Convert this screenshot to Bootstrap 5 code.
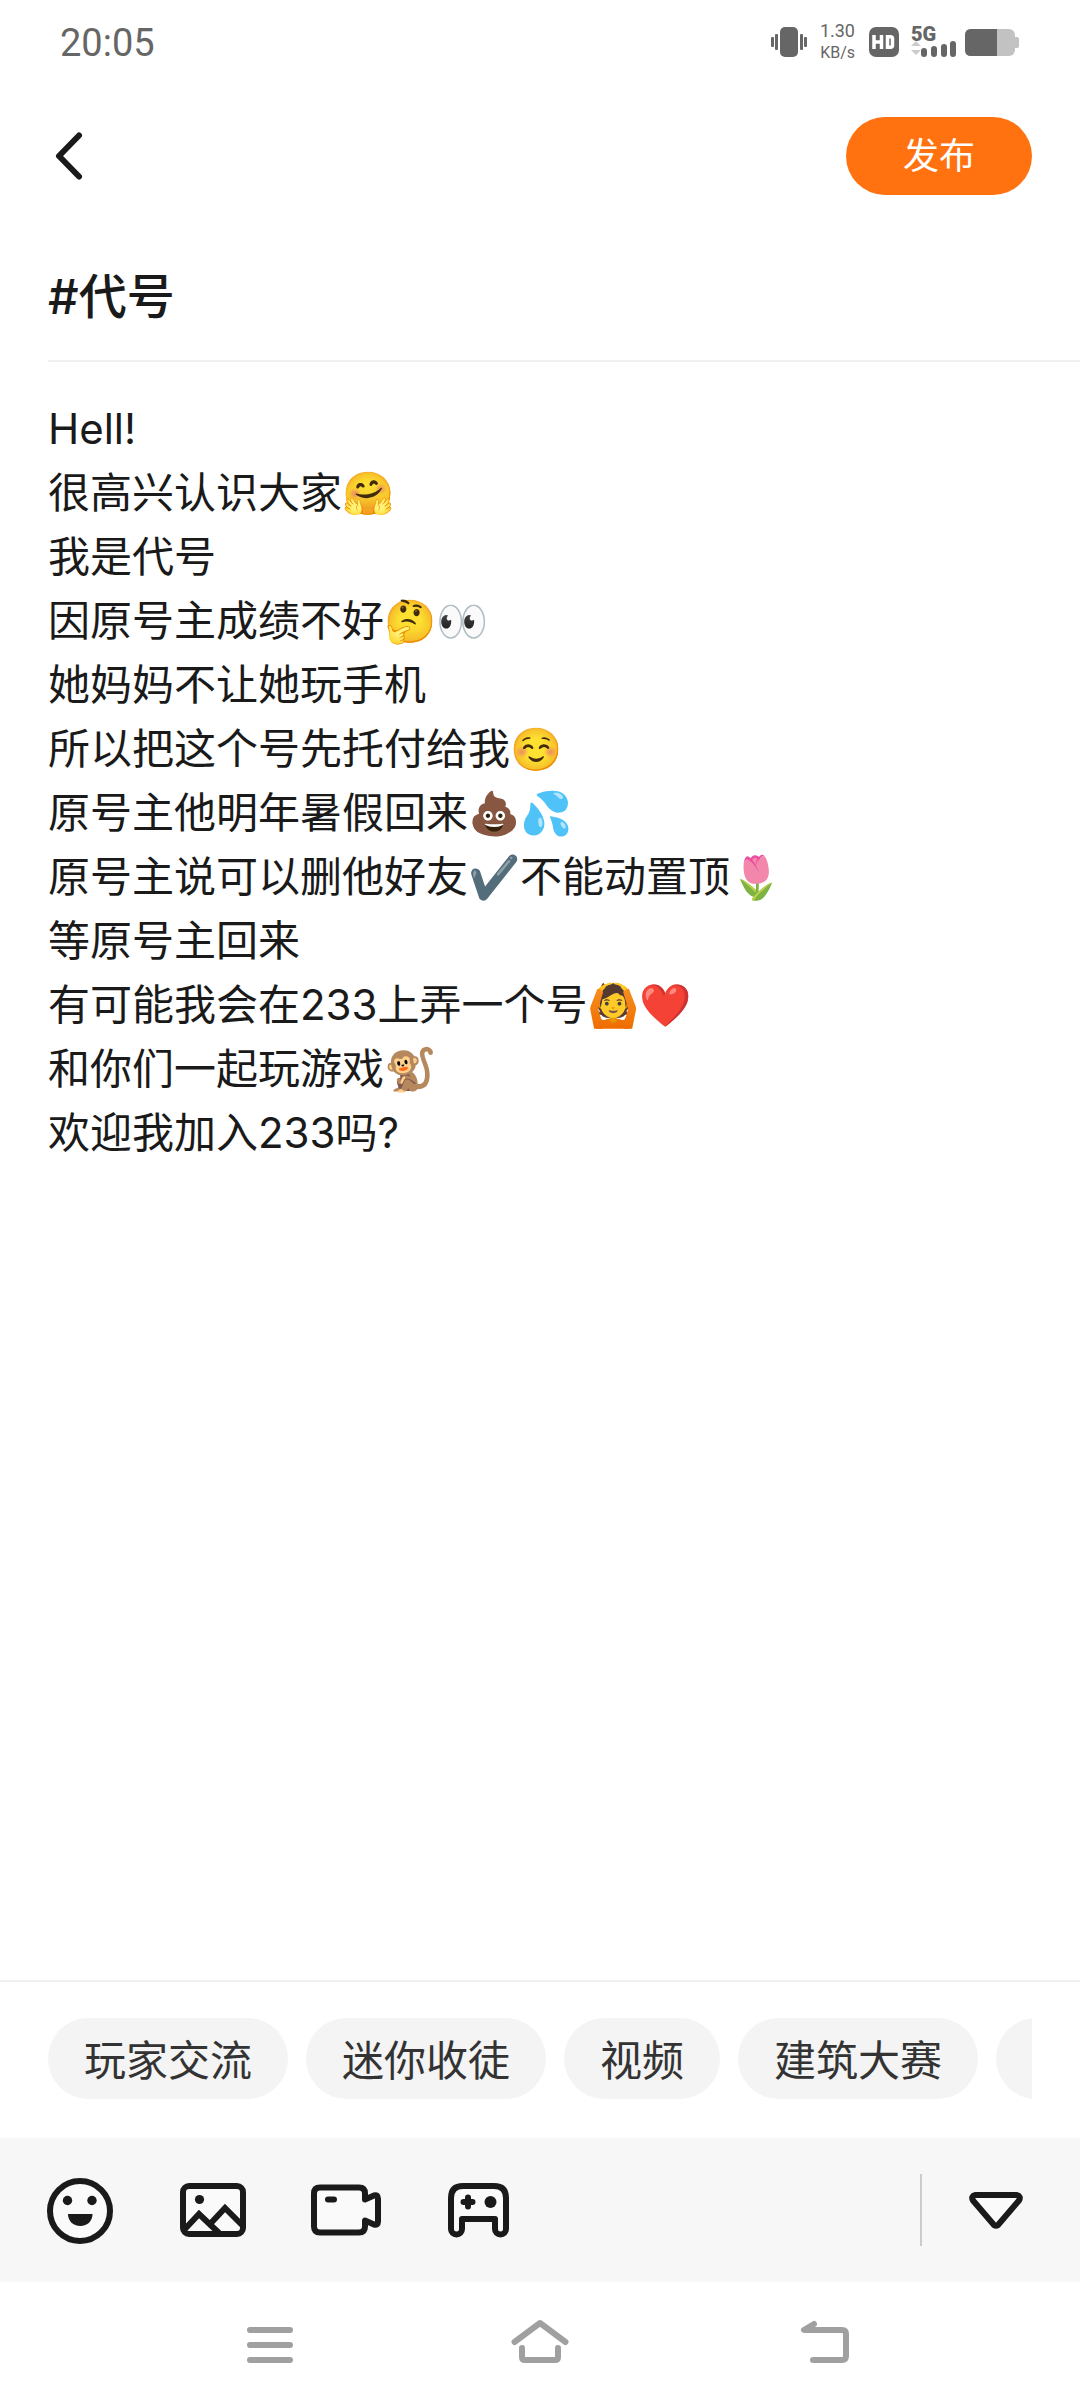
<!DOCTYPE html>
<html lang="zh-CN">
<head>
<meta charset="utf-8">
<meta name="viewport" content="width=device-width, initial-scale=1">
<title>#代号</title>
<link rel="stylesheet" href="https://cdn.jsdelivr.net/npm/bootstrap@5.3.0/dist/css/bootstrap.min.css">
<style>
body{font-family:Inter,"Noto Sans CJK SC",sans-serif;color:#1a1a1a;background:#fff}
svg{display:block;flex:none}
.status-bar{height:84px;padding:0 61px 0 60px;color:#666;font-family:Roboto,sans-serif}
.clock{font-size:38px;line-height:40px;padding-top:2px}
.speed{font-size:18px;line-height:18px;text-align:right;margin:0 14px 0 12px}
.speed-unit{font-size:16px}
.network-type{font-size:20px;line-height:16px;font-weight:900}
.top-bar{height:144px;padding:0 48px}
.publish{width:186px;height:78px;font-size:36px;line-height:36px;background:#ff720f;color:#fff}
.publish:hover{background:#e9660a;color:#fff}
.title-row{margin-left:48px;border-bottom:2px solid #f0f0f0}
.title-input{height:130px;margin-bottom:2px;font-size:48px;font-weight:500;color:inherit}
.post-text{padding:35px 48px;font-size:42px;line-height:64px;color:inherit;resize:none}
.topics-wrap{border-top:2px solid #f0f0f0;padding:36px 48px 39px}
.topics{gap:18px}
.topic{height:81px;padding:4px 36px 0;font-size:42px;line-height:76px;background:#f4f4f4;color:#333;white-space:nowrap;flex:none}
.tool-bar{height:144px;padding:0 48px 0 44px;background:#f7f7f7}
.tools{gap:61px}
.rule{width:2px;height:72px;background:#ccc;margin-right:38px}
.nav-keys{height:126px;gap:180px}
</style>
</head>
<body class="d-flex flex-column min-vh-100">
<div class="status-bar d-flex align-items-center justify-content-between">
  <span class="clock">20:05</span>
  <div class="d-flex align-items-center">
    <svg width="38" height="32" viewBox="0 0 38 32" fill="#666"><rect x="10" y="1" width="18" height="30" rx="5"/><rect x="1" y="11" width="3" height="10" rx="1"/><rect x="5" y="8" width="3" height="16" rx="1"/><rect x="30" y="8" width="3" height="16" rx="1"/><rect x="34" y="11" width="3" height="10" rx="1"/></svg>
    <div class="speed d-flex flex-column gap-1"><span>1.30</span><span class="speed-unit">KB/s</span></div>
    <svg width="30" height="30" viewBox="0 0 30 30"><rect width="30" height="30" rx="7" fill="#666"/><path d="M5 8v14M12.500 8v14M5 15h7.500" fill="none" stroke="#fff" stroke-width="3.500"/><path d="M18.500 9.700h3q2 0 2 2v6.600q0 2-2 2h-3z" fill="none" stroke="#fff" stroke-width="3.500"/></svg>
    <div class="ms-2 ps-1">
      <div class="network-type">5G</div>
      <svg width="46" height="16" viewBox="0 0 46 16" overflow="visible"><path d="M0 4l5-5 5 5zM0 8l5 5 5-5z" fill="#ccc"/><g fill="#666"><rect x="10" y="6" width="6" height="9" rx="3"/><rect x="20" y="4" width="6" height="11" rx="3"/><rect x="30" y="2" width="6" height="13" rx="3"/><rect x="39" y="-1" width="6" height="16" rx="3"/></g></svg>
    </div>
    <svg class="ms-2" width="54" height="28" viewBox="0 0 54 28"><rect y="1" width="50" height="27" rx="6" fill="#c2c2c2"/><path d="M6 1h26v27H6q-6 0-6-6V7q0-6 6-6z" fill="#666"/><rect x="49" y="9" width="5" height="11" rx="2" fill="#c2c2c2"/></svg>
  </div>
</div>
<header class="top-bar d-flex align-items-center justify-content-between">
  <button type="button" class="btn p-0 border-0" aria-label="返回"><svg width="42" height="54" viewBox="0 0 42 54"><path d="M31 6.500L11 27l20 20.500" fill="none" stroke="#1a1a1a" stroke-width="6" stroke-linecap="round" stroke-linejoin="round"/></svg></button>
  <button type="button" class="btn publish rounded-pill border-0 p-0">发布</button>
</header>
<main class="d-flex flex-column flex-grow-1">
  <div class="title-row"><input type="text" class="title-input form-control border-0 rounded-0 p-0 bg-transparent" aria-label="标题" value="#代号"></div>
  <textarea class="post-text form-control border-0 rounded-0 flex-grow-1 bg-transparent" aria-label="正文" spellcheck="false">Hell!
很高兴认识大家🤗
我是代号
因原号主成绩不好🤔👀
她妈妈不让她玩手机
所以把这个号先托付给我☺️
原号主他明年暑假回来💩💦
原号主说可以删他好友✔️不能动置顶🌷
等原号主回来
有可能我会在233上弄一个号🙆❤️
和你们一起玩游戏🐒
欢迎我加入233吗?</textarea>
</main>
<section class="topics-wrap">
  <div class="topics d-flex overflow-hidden">
    <button type="button" class="topic btn rounded-pill border-0">玩家交流</button>
    <button type="button" class="topic btn rounded-pill border-0">迷你收徒</button>
    <button type="button" class="topic btn rounded-pill border-0">视频</button>
    <button type="button" class="topic btn rounded-pill border-0">建筑大赛</button>
    <button type="button" class="topic btn rounded-pill border-0" aria-label="更多"><svg width="80" height="1"></svg></button>
  </div>
</section>
<div class="tool-bar d-flex align-items-center justify-content-between">
  <div class="tools d-flex">
    <button type="button" class="btn p-0 border-0" aria-label="表情"><svg width="72" height="72" viewBox="0 0 72 72"><circle cx="36" cy="37" r="30" fill="#fafafa" stroke="#1a1a1a" stroke-width="6"/><g fill="#1a1a1a"><circle cx="23.500" cy="26.500" r="4.700"/><circle cx="48" cy="26.500" r="4.700"/><path d="M24 40h24.500c0 7-5 12-12.200 12S24 47 24 40z"/></g></svg></button>
    <button type="button" class="btn p-0 border-0" aria-label="图片"><svg width="72" height="72" viewBox="0 0 72 72"><rect x="6" y="12" width="60" height="48" rx="6" fill="#fafafa" stroke="#1a1a1a" stroke-width="6"/><circle cx="22.500" cy="25.500" r="4.600" fill="#1a1a1a"/><path d="M7 56l15-16 20 19M34 49l14-15 17 17" fill="none" stroke="#1a1a1a" stroke-width="6"/></svg></button>
    <button type="button" class="btn p-0 border-0" aria-label="视频"><svg width="72" height="72" viewBox="0 0 72 72"><path d="M10 13.500h39q6 0 6 6v6l9-4q4-1 4 3v23q0 4-4 3l-9-4v6q0 6-6 6H10q-6 0-6-6V19.500q0-6 6-6z" fill="#fafafa" stroke="#1a1a1a" stroke-width="6" stroke-linejoin="round"/><rect x="15" y="22.500" width="12" height="6" rx="3" fill="#1a1a1a"/></svg></button>
    <button type="button" class="btn p-0 border-0" aria-label="游戏"><svg width="72" height="72" viewBox="0 0 72 72"><path d="M20 12h31q12 0 12 12v31a5.500 5.500 0 0 1-11 0V45H19v10a5.500 5.500 0 0 1-11 0V24q0-12 12-12z" fill="#fafafa" stroke="#1a1a1a" stroke-width="6" stroke-linejoin="round"/><path d="M25 23.500v9M20.500 28h9" stroke="#1a1a1a" stroke-width="6" stroke-linecap="round"/><circle cx="47.500" cy="28" r="6" fill="#1a1a1a"/></svg></button>
  </div>
  <div class="d-flex align-items-center">
    <span class="rule"></span>
    <button type="button" class="btn p-0 border-0" aria-label="收起"><svg width="72" height="72" viewBox="0 0 72 72"><path d="M15.500 21h41q5 1 2.500 5.500L38 51q-2 1.500-4 0L13 26.500Q10.500 22 15.500 21z" fill="#fafafa" stroke="#1a1a1a" stroke-width="6" stroke-linejoin="round"/></svg></button>
  </div>
</div>
<nav class="nav-keys d-flex align-items-center justify-content-center">
  <button type="button" class="btn p-0 border-0" aria-label="最近任务"><svg width="90" height="60" viewBox="0 0 90 60" fill="none" stroke="#a0a0a0" stroke-width="6" stroke-linecap="round"><path d="M25 15h40M25 30h40M25 45h40"/></svg></button>
  <button type="button" class="btn p-0 border-0" aria-label="主页"><svg width="90" height="60" viewBox="0 0 90 60" fill="none" stroke="#a0a0a0" stroke-width="6" stroke-linecap="round" stroke-linejoin="round"><path d="M19.500 27L45 8l25.500 19M27 33v9q0 3 3 3h30q3 0 3-3v-9"/></svg></button>
  <button type="button" class="btn p-0 border-0" aria-label="返回上一级"><svg width="90" height="60" viewBox="0 0 90 60" fill="none" stroke="#a0a0a0" stroke-width="6" stroke-linecap="round" stroke-linejoin="round"><path d="M49 9l-10 6h38q4 0 4 4v22q0 4-4 4H48"/></svg></button>
</nav>
<script src="https://cdn.jsdelivr.net/npm/bootstrap@5.3.0/dist/js/bootstrap.bundle.min.js"></script>
</body>
</html>
